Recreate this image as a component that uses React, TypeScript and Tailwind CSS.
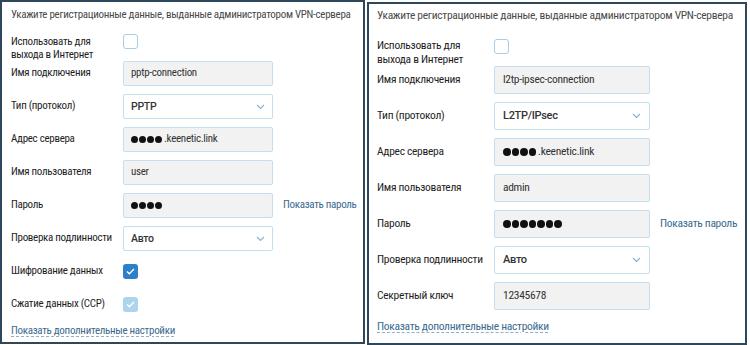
import React from "react";

const font = { fontFamily: "'Liberation Sans Narrow', 'Roboto Condensed', Roboto, Arial, sans-serif" };
const medium = { fontFamily: "Roboto, Arial, sans-serif" };

function Dots({ n, size }: { n: number; size: string }) {
  return (
    <span className="inline-flex items-center gap-[1px]">
      {Array.from({ length: n }).map((_, i) => (
        <span key={i} className={`${size} rounded-full bg-[#111]`} />
      ))}
    </span>
  );
}

function Chevron() {
  return (
    <svg width="9" height="6" viewBox="0 0 9 6" className="shrink-0">
      <path d="M1 1l3.5 3.5L8 1" fill="none" stroke="#8fb0c8" strokeWidth="1.2" />
    </svg>
  );
}

function Check({ on, disabled }: { on?: boolean; disabled?: boolean }) {
  if (!on) {
    return (
      <span className="block shrink-0 w-[15px] h-[15px] rounded-[3px] border-[1.5px] border-[#a9cde6] bg-white" />
    );
  }
  return (
    <span
      className={
        "flex shrink-0 items-center justify-center w-[15px] h-[15px] rounded-[3px] " +
        (disabled ? "bg-[#acd4ef]" : "bg-[#2b80c8]")
      }
    >
      <svg width="9" height="7" viewBox="0 0 9 7">
        <path d="M1 3.5l2.3 2.2L8 1" fill="none" stroke="#fff" strokeWidth="1.4" />
      </svg>
    </span>
  );
}

function LeftPanel() {
  const input =
    "w-[150px] h-[25px] flex items-center px-[7px] border border-[#c3dff0] rounded-[2px] text-[#333] shrink-0";
  const row = "flex items-center h-[25px] whitespace-nowrap";
  const label = "w-[112px] shrink-0 text-[#1e1e1e]";
  return (
    <div className="w-[365px] h-[344px] border-2 border-[#2f475b] pl-[9px] text-[11px] tracking-[-0.3px] shrink-0">
      <div className="mt-[6px] leading-[14px] text-[#4a4a4a] whitespace-nowrap">
        Укажите регистрационные данные, выданные администратором VPN-сервера
      </div>
      <div className="flex mt-[12px]">
        <div className={label + " leading-[13px] pt-[1px] h-[27px] whitespace-nowrap"}>
          Использовать для
          <br />
          выхода в Интернет
        </div>
        <Check />
      </div>
      <div className="flex flex-col gap-[8px]">
        <div className={row}>
          <div className={label}>Имя подключения</div>
          <div className={input + " bg-[#f2f2f2]"}>pptp-connection</div>
        </div>
        <div className={row}>
          <div className={label}>Тип (протокол)</div>
          <div className={input + " bg-white justify-between text-[#222]"}>
            <span className="font-medium text-[10.5px]" style={medium}>PPTP</span>
            <Chevron />
          </div>
        </div>
        <div className={row}>
          <div className={label}>Адрес сервера</div>
          <div className={input + " bg-[#f2f2f2] gap-[2px]"}>
            <Dots n={4} size="w-[7px] h-[7px]" />
            <span>.keenetic.link</span>
          </div>
        </div>
        <div className={row}>
          <div className={label}>Имя пользователя</div>
          <div className={input + " bg-[#f2f2f2]"}>user</div>
        </div>
        <div className={row}>
          <div className={label}>Пароль</div>
          <div className={input + " bg-[#f2f2f2]"}>
            <Dots n={4} size="w-[7px] h-[7px]" />
          </div>
          <a className="ml-[10px] text-[#3a6a8f]">Показать пароль</a>
        </div>
        <div className={row}>
          <div className={label}>Проверка подлинности</div>
          <div className={input + " bg-white justify-between text-[#222]"}>
            <span className="font-medium text-[10.5px]" style={medium}>Авто</span>
            <Chevron />
          </div>
        </div>
        <div className={row}>
          <div className={label}>Шифрование данных</div>
          <Check on />
        </div>
        <div className={row}>
          <div className={label}>Сжатие данных (CCP)</div>
          <Check on disabled />
        </div>
      </div>
      <div className="mt-[7px] leading-[14px] whitespace-nowrap">
        <a className="text-[#3a6a8f] underline decoration-dashed decoration-[#8fb0c8] underline-offset-2">
          Показать дополнительные настройки
        </a>
      </div>
    </div>
  );
}

function RightPanel() {
  const input =
    "w-[156px] h-[28px] flex items-center px-[8px] border border-[#c3dff0] rounded-[2px] text-[#333] shrink-0";
  const row = "flex items-center h-[28px] whitespace-nowrap";
  const label = "w-[117px] shrink-0 text-[#1e1e1e]";
  return (
    <div className="mt-[2px] ml-[2px] w-[380px] h-[343px] border-2 border-[#2f475b] pl-[8px] text-[11.5px] tracking-[-0.3px] shrink-0">
      <div className="mt-[4px] leading-[14px] text-[#4a4a4a] whitespace-nowrap">
        Укажите регистрационные данные, выданные администратором VPN-сервера
      </div>
      <div className="flex mt-[17px]">
        <div className={label + " leading-[13.5px] h-[27px] whitespace-nowrap"}>
          Использовать для
          <br />
          выхода в Интернет
        </div>
        <Check />
      </div>
      <div className="flex flex-col gap-[8px]">
        <div className={row}>
          <div className={label}>Имя подключения</div>
          <div className={input + " bg-[#f2f2f2]"}>l2tp-ipsec-connection</div>
        </div>
        <div className={row}>
          <div className={label}>Тип (протокол)</div>
          <div className={input + " bg-white justify-between text-[#222]"}>
            <span className="font-medium text-[11px]" style={medium}>L2TP/IPsec</span>
            <Chevron />
          </div>
        </div>
        <div className={row}>
          <div className={label}>Адрес сервера</div>
          <div className={input + " bg-[#f2f2f2] gap-[2px]"}>
            <Dots n={4} size="w-[7.5px] h-[7.5px]" />
            <span>.keenetic.link</span>
          </div>
        </div>
        <div className={row}>
          <div className={label}>Имя пользователя</div>
          <div className={input + " bg-[#f2f2f2]"}>admin</div>
        </div>
        <div className={row}>
          <div className={label}>Пароль</div>
          <div className={input + " bg-[#f2f2f2]"}>
            <Dots n={7} size="w-[7.5px] h-[7.5px]" />
          </div>
          <a className="ml-[10px] text-[#3a6a8f]">Показать пароль</a>
        </div>
        <div className={row}>
          <div className={label}>Проверка подлинности</div>
          <div className={input + " bg-white justify-between text-[#222]"}>
            <span className="font-medium text-[11px]" style={medium}>Авто</span>
            <Chevron />
          </div>
        </div>
        <div className={row}>
          <div className={label}>Секретный ключ</div>
          <div className={input + " bg-[#f2f2f2]"}>12345678</div>
        </div>
      </div>
      <div className="mt-[9px] leading-[14px] whitespace-nowrap">
        <a className="text-[#3a6a8f] underline decoration-dashed decoration-[#8fb0c8] underline-offset-2">
          Показать дополнительные настройки
        </a>
      </div>
    </div>
  );
}

export default function App() {
  return (
    <div className="w-[750px] h-[345px] bg-white flex items-start" style={font}>
      <LeftPanel />
      <RightPanel />
    </div>
  );
}
